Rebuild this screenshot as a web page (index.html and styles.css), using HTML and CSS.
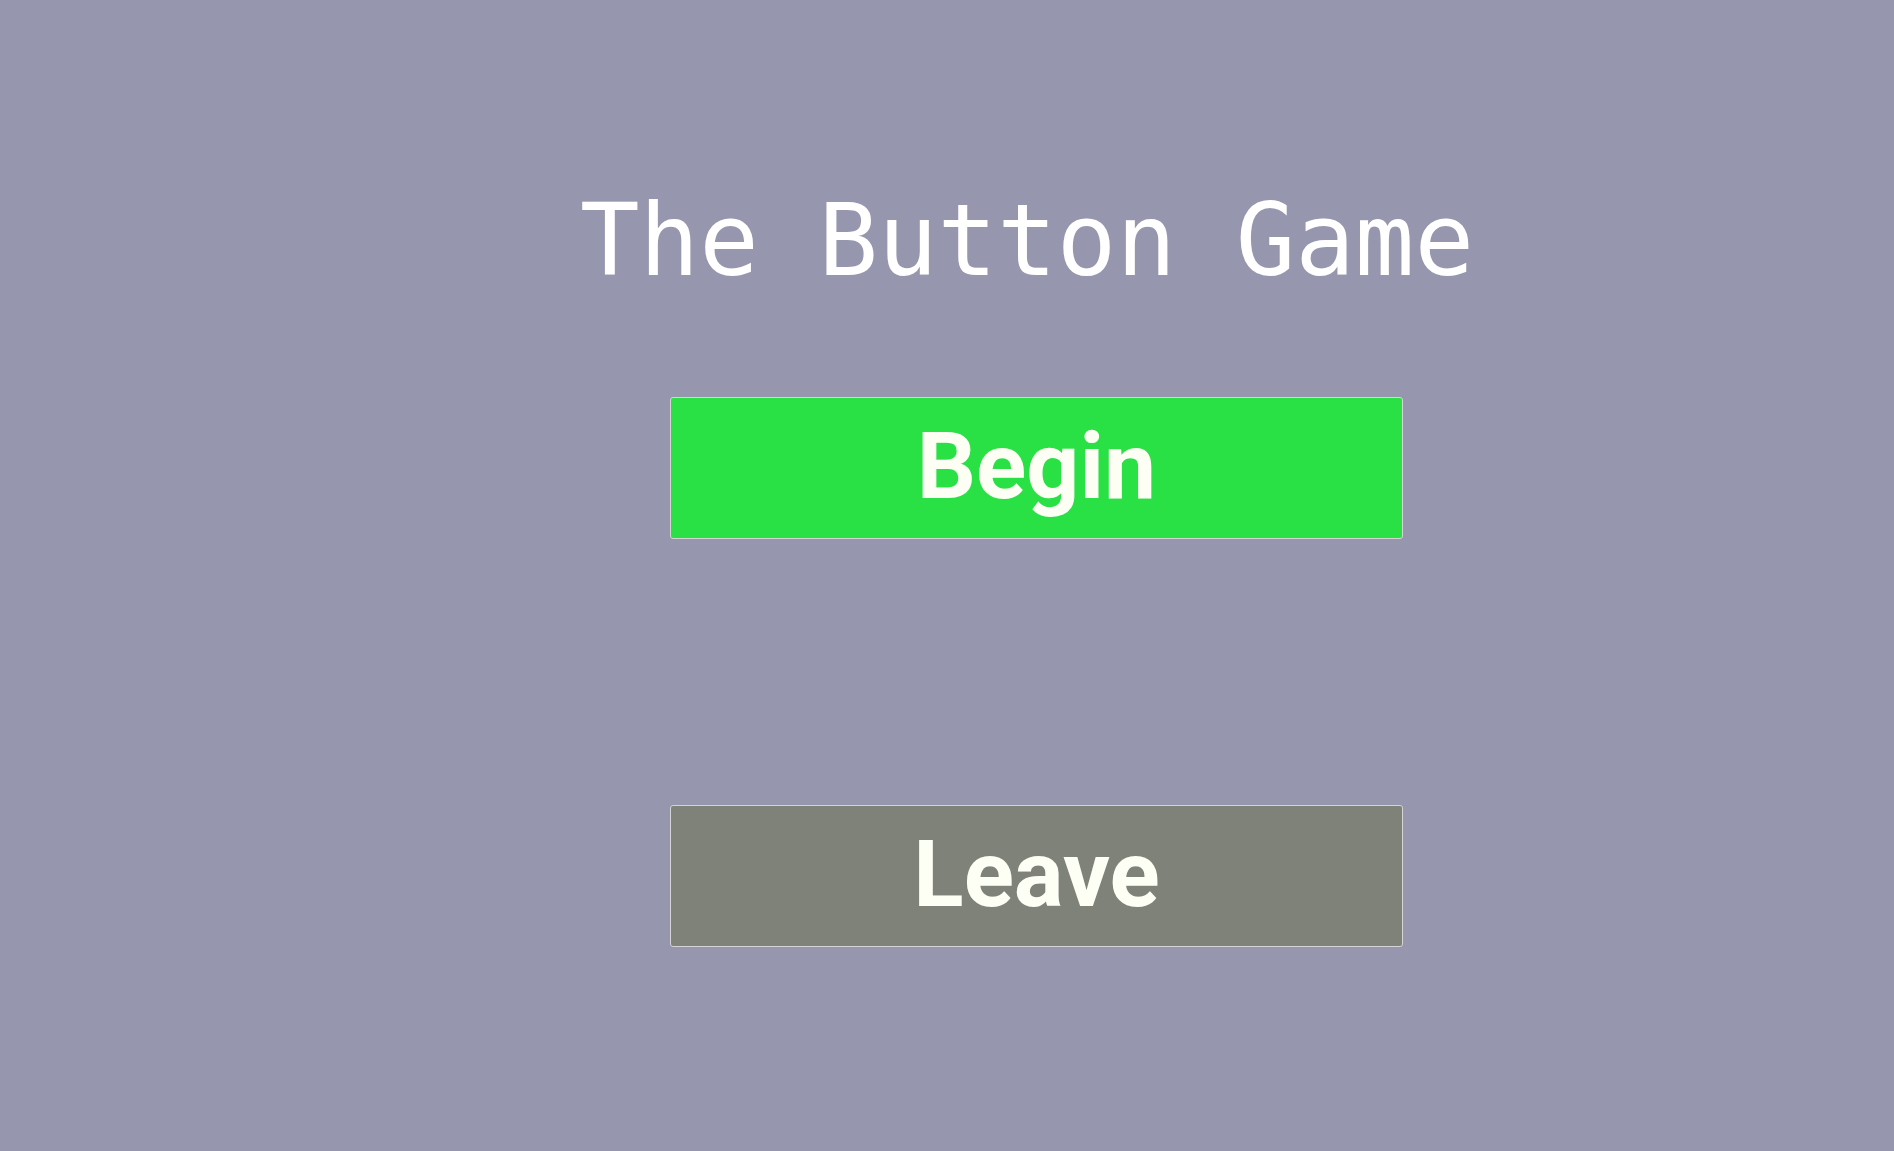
FILE: index.html
```html
<!DOCTYPE html>
<html>
<head>
<meta charset="utf-8">
<title>The Button Game</title>
<link rel="stylesheet" href="styles.css">
</head>
<body>
<main class="screen">
  <h1 class="title">The Button Game</h1>
  <div class="actions">
    <button class="btn btn-begin">Begin</button>
    <button class="btn btn-leave">Leave</button>
  </div>
</main>
</body>
</html>
```
FILE: styles.css
```css
html, body {
  margin: 0;
  padding: 0;
  height: 100%;
}
body {
  background: #9696ae;
  overflow: hidden;
}
.screen {
  display: flex;
  flex-direction: column;
  padding-top: 183px;
}
.title {
  margin: 0 0 0 580px;
  font-family: "DejaVu Sans Mono", monospace;
  font-weight: normal;
  font-size: 99px;
  line-height: normal;
  color: #ffffff;
  white-space: pre;
}
.actions {
  display: flex;
  flex-direction: column;
  gap: 266px;
  margin-top: 99px;
  margin-left: 670px;
}
.btn {
  width: 733px;
  height: 142px;
  box-sizing: border-box;
  border: 1px solid #d4d4d4;
  border-radius: 3px;
  color: #fdfff5;
  font-family: Roboto, "Liberation Sans", sans-serif;
  font-weight: bold;
  font-size: 93px;
  line-height: 1;
  padding: 0 0 3px 0;
  display: flex;
  align-items: center;
  justify-content: center;
}
.btn-begin {
  background: #29e045;
}
.btn-leave {
  background: #7e8279;
}
```
